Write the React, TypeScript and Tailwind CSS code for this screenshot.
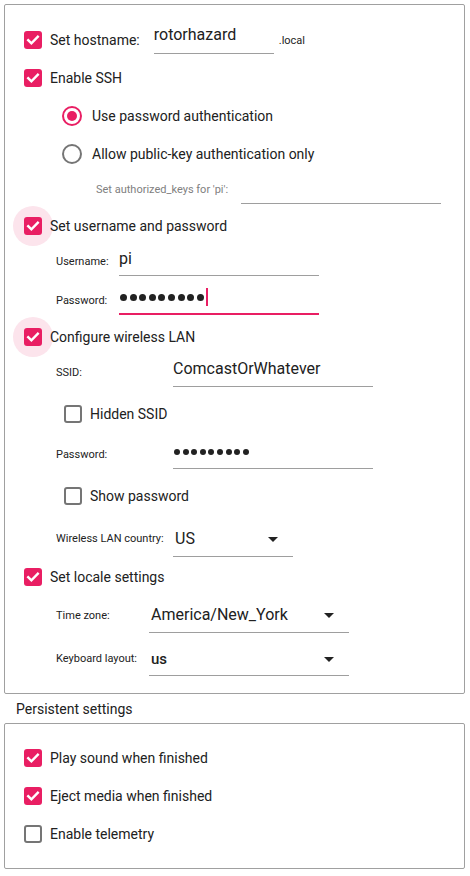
import React from 'react';

const PINK = 'bg-[#e91e63]';

function CheckMark() {
  return (
    <svg viewBox="0 0 18 18" className="w-[18px] h-[18px]">
      <path d="M4.2 9.2l3.2 3.1 6.4-6.6" fill="none" stroke="#fff" strokeWidth={2.4} strokeLinecap="square" />
    </svg>
  );
}

function Checkbox({ checked, halo }: { checked: boolean; halo?: boolean }) {
  return (
    <div className="relative w-[18px] h-[18px] shrink-0">
      {halo && <div className="absolute -left-[11px] -top-[11px] w-[40px] h-[40px] rounded-full bg-[#fce4ec]" />}
      {checked ? (
        <div className={`relative w-[18px] h-[18px] rounded-[3px] ${PINK}`}>
          <CheckMark />
        </div>
      ) : (
        <div className="relative w-[18px] h-[18px] rounded-[3px] border-2 border-[#757575] bg-white" />
      )}
    </div>
  );
}

function Radio({ checked }: { checked: boolean }) {
  return checked ? (
    <div className="w-[20px] h-[20px] rounded-full border-2 border-[#e91e63] flex items-center justify-center shrink-0">
      <div className="w-[10px] h-[10px] rounded-full bg-[#e91e63]" />
    </div>
  ) : (
    <div className="w-[20px] h-[20px] rounded-full border-2 border-[#757575] shrink-0" />
  );
}

function CheckRow({ label, checked, halo, h = 'h-[38px]', indent = 'pl-[19px]' }: { label: string; checked: boolean; halo?: boolean; h?: string; indent?: string }) {
  return (
    <div className={`flex items-center ${h} ${indent}`}>
      <Checkbox checked={checked} halo={halo} />
      <span className="relative ml-[8px] text-[14px] leading-[20px] text-[#212121]">{label}</span>
    </div>
  );
}

function Dots({ n, size, gap }: { n: number; size: string; gap: string }) {
  return (
    <div className={`flex items-center h-[20px] ${gap}`}>
      {Array.from({ length: n }).map((_, i) => (
        <span key={i} className={`${size} rounded-full bg-[#222]`} />
      ))}
    </div>
  );
}

function Arrow() {
  return (
    <svg width="10" height="5" viewBox="0 0 10 5">
      <path d="M0 0h10L5 5z" fill="#222" />
    </svg>
  );
}

export default function App() {
  return (
    <div className="w-[470px] h-[876px] bg-white text-[#212121] pt-[4px] pl-[4px]" style={{ fontFamily: 'Roboto, "Noto Sans", sans-serif' }}>
      {/* Main settings box */}
      <div className="w-[461px] h-[690px] border border-[#a0a0a0] rounded-[2px] pt-[16px] flex flex-col">
        {/* hostname */}
        <div className="flex items-start h-[38px] pl-[19px]">
          <div className="mt-[10px]"><Checkbox checked /></div>
          <span className="ml-[8px] mt-[9px] text-[14px] leading-[20px]">Set hostname:</span>
          <div className="ml-[14px] w-[120px] h-[33px] border-b border-[#9e9e9e] pt-[4px] text-[16px] leading-[20px]">rotorhazard</div>
          <span className="ml-[5px] mt-[13px] text-[11px] leading-[14px] text-[#222]">.local</span>
        </div>
        <CheckRow label="Enable SSH" checked />
        <div className="flex items-center h-[38px] pl-[57px]">
          <Radio checked />
          <span className="ml-[10px] text-[14px] leading-[20px]">Use password authentication</span>
        </div>
        <div className="flex items-center h-[38px] pl-[57px]">
          <Radio checked={false} />
          <span className="ml-[10px] text-[14px] leading-[20px]">Allow public-key authentication only</span>
        </div>
        {/* authorized keys */}
        <div className="flex items-start h-[38px] pl-[91px]">
          <span className="w-[145px] mt-[10px] text-[11px] leading-[14px] text-[#808080]">Set authorized_keys for 'pi':</span>
          <div className="w-[200px] h-[31px] border-b border-[#9e9e9e]" />
        </div>
        <CheckRow label="Set username and password" checked halo h="h-[30px]" />
        {/* username */}
        <div className="flex items-start h-[39px] pl-[51px]">
          <span className="w-[63px] mt-[14px] text-[11px] leading-[14px] text-[#222]">Username:</span>
          <div className="w-[200px] h-[35px] border-b border-[#9e9e9e] pt-[8px] text-[16px] leading-[20px]">pi</div>
        </div>
        {/* password */}
        <div className="flex items-start h-[40px] pl-[51px]">
          <span className="w-[63px] mt-[14px] text-[11px] leading-[14px] text-[#222]">Password:</span>
          <div className="w-[200px] h-[35px] border-b-2 border-[#e91e63] pt-[7px] flex items-start">
            <div className="flex items-center h-[20px] gap-[2.6px] pl-[1px]">
              {Array.from({ length: 9 }).map((_, i) => (
                <span key={i} className="w-[7px] h-[7px] rounded-full bg-[#222]" />
              ))}
            </div>
            <span className="ml-[2px] mt-[1px] w-[2px] h-[18px] bg-[#e91e63]" />
          </div>
        </div>
        <CheckRow label="Configure wireless LAN" checked halo h="h-[34px]" />
        {/* SSID */}
        <div className="flex items-start h-[38px] pl-[51px]">
          <span className="w-[117px] mt-[12px] text-[11px] leading-[14px] text-[#222]">SSID:</span>
          <div className="w-[200px] h-[33px] border-b border-[#9e9e9e] pt-[5px] text-[16px] leading-[20px]">ComcastOrWhatever</div>
        </div>
        <CheckRow label="Hidden SSID" checked={false} h="h-[44px]" indent="pl-[59px]" />
        {/* wifi password */}
        <div className="flex items-start h-[38px] pl-[51px]">
          <span className="w-[117px] mt-[12px] text-[11px] leading-[14px] text-[#222]">Password:</span>
          <div className="w-[200px] h-[33px] border-b border-[#9e9e9e] pt-[6px] pl-[1px]">
            <Dots n={9} size="w-[6px] h-[6px]" gap="gap-[2.6px]" />
          </div>
        </div>
        <CheckRow label="Show password" checked={false} h="h-[44px]" indent="pl-[59px]" />
        {/* country */}
        <div className="flex items-start h-[42px] pl-[51px]">
          <span className="w-[117px] mt-[14px] text-[11px] leading-[14px] text-[#222]">Wireless LAN country:</span>
          <div className="w-[120px] h-[39px] border-b border-[#9e9e9e] pt-[11px] pl-[2px] flex items-start">
            <span className="w-[93px] text-[16px] leading-[20px]">US</span>
            <div className="mt-[8px]"><Arrow /></div>
          </div>
        </div>
        <CheckRow label="Set locale settings" checked h="h-[34px]" />
        {/* time zone */}
        <div className="flex items-start h-[44px] pl-[51px]">
          <span className="w-[93px] mt-[15px] text-[11px] leading-[14px] text-[#222]">Time zone:</span>
          <div className="w-[200px] h-[39px] border-b border-[#9e9e9e] pt-[11px] pl-[2px] flex items-start">
            <span className="w-[173px] text-[16px] leading-[20px]">America/New_York</span>
            <div className="mt-[8px]"><Arrow /></div>
          </div>
        </div>
        {/* keyboard */}
        <div className="flex items-start h-[42px] pl-[51px]">
          <span className="w-[93px] mt-[14px] text-[11px] leading-[14px] text-[#222]">Keyboard layout:</span>
          <div className="w-[200px] h-[38px] border-b border-[#9e9e9e] pt-[11px] pl-[2px] flex items-start">
            <span className="w-[173px] text-[15px] leading-[20px] font-medium">us</span>
            <div className="mt-[8px]"><Arrow /></div>
          </div>
        </div>
      </div>

      {/* Persistent settings */}
      <div className="h-[29px] flex items-center pl-[12px] text-[14px] leading-[20px]">Persistent settings</div>
      <div className="w-[461px] h-[146px] border border-[#a0a0a0] rounded-[2px] pt-[15px] flex flex-col">
        <CheckRow label="Play sound when finished" checked />
        <CheckRow label="Eject media when finished" checked />
        <CheckRow label="Enable telemetry" checked={false} />
      </div>
    </div>
  );
}
